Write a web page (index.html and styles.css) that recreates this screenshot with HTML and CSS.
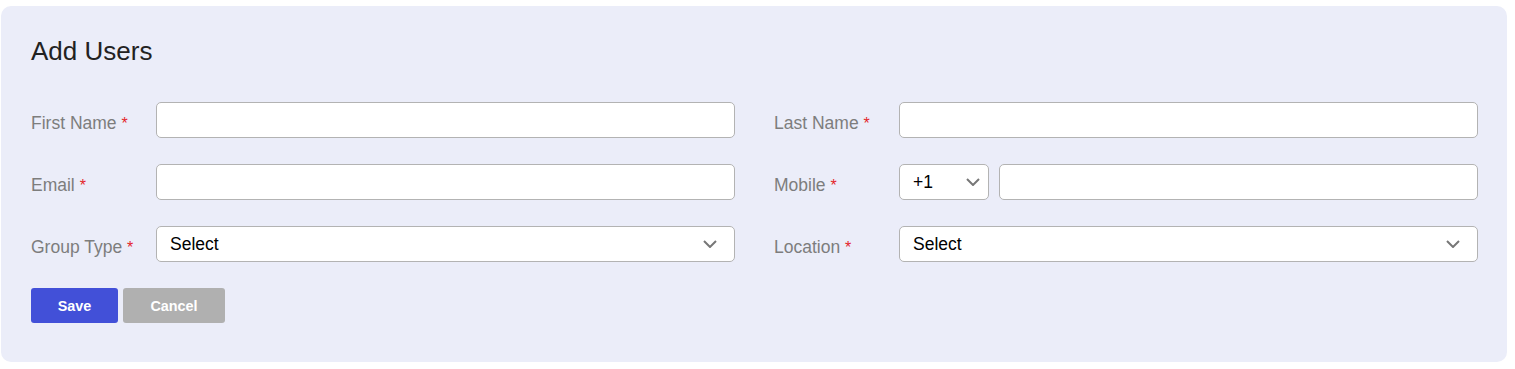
FILE: index.html
```html
<!DOCTYPE html>
<html lang="en">
<head>
    <meta charset="UTF-8">
    <meta name="viewport" content="width=device-width, initial-scale=1.0">
    <title>Add Users</title>
    <link rel="stylesheet" href="styles.css">
</head>
<body>
    <div class="card">
        <h2 class="title">Add Users</h2>
        <form class="user-form">
            <div class="form-grid">
                <div class="form-group">
                    <label class="form-label">First Name <span class="req">*</span></label>
                    <input type="text" class="form-input">
                </div>
                <div class="form-group">
                    <label class="form-label">Last Name <span class="req">*</span></label>
                    <input type="text" class="form-input">
                </div>
                <div class="form-group">
                    <label class="form-label">Email <span class="req">*</span></label>
                    <input type="email" class="form-input">
                </div>
                <div class="form-group">
                    <label class="form-label">Mobile <span class="req">*</span></label>
                    <div class="phone-row">
                        <div class="select-box code-box">
                            <span class="select-value">+1</span>
                            <svg class="chevron" width="14" height="8" viewBox="0 0 14 8"><path d="M1 1l6 6 6-6" fill="none" stroke="#777" stroke-width="2"/></svg>
                        </div>
                        <input type="tel" class="form-input">
                    </div>
                </div>
                <div class="form-group">
                    <label class="form-label">Group Type <span class="req">*</span></label>
                    <div class="select-box">
                        <span class="select-value">Select</span>
                        <svg class="chevron" width="14" height="8" viewBox="0 0 14 8"><path d="M1 1l6 6 6-6" fill="none" stroke="#777" stroke-width="2"/></svg>
                    </div>
                </div>
                <div class="form-group">
                    <label class="form-label">Location <span class="req">*</span></label>
                    <div class="select-box">
                        <span class="select-value">Select</span>
                        <svg class="chevron" width="14" height="8" viewBox="0 0 14 8"><path d="M1 1l6 6 6-6" fill="none" stroke="#777" stroke-width="2"/></svg>
                    </div>
                </div>
            </div>
            <div class="actions">
                <button type="submit" class="btn btn-save">Save</button>
                <button type="button" class="btn btn-cancel">Cancel</button>
            </div>
        </form>
    </div>
</body>
</html>
```

FILE: styles.css
```css
* {
    margin: 0;
    padding: 0;
    box-sizing: border-box;
    font-family: 'Liberation Sans', Arial, sans-serif;
}

body {
    background: #fff;
    padding: 6px 8px 0 1px;
}

.card {
    background: #ebedf9;
    border-radius: 10px;
    padding: 30px 29px 40px 30px;
    height: 356px;
}

.title {
    font-size: 26px;
    font-weight: 400;
    color: #222;
    line-height: 30px;
    margin-bottom: 36px;
}

.form-grid {
    display: grid;
    grid-template-columns: 1fr 1fr;
    column-gap: 39px;
    row-gap: 26px;
}

.form-group {
    display: flex;
    align-items: center;
}

.form-label {
    width: 125px;
    flex-shrink: 0;
    font-size: 17.5px;
    color: #7d7d7d;
    padding-top: 7px;
}

.req {
    color: #e4262b;
    font-size: 16px;
}

.form-input {
    flex: 1;
    min-width: 0;
    height: 36px;
    border: 1px solid #b3b3b3;
    border-radius: 5px;
    background: #fff;
    font-size: 17.5px;
    padding: 0 13px;
    outline: none;
}

.select-box {
    flex: 1;
    height: 36px;
    border: 1px solid #b3b3b3;
    border-radius: 5px;
    background: #fff;
    display: flex;
    align-items: center;
    justify-content: space-between;
    padding: 0 17px 0 13px;
}

.select-value {
    font-size: 17.5px;
    color: #000;
    padding-top: 1px;
}

.chevron {
    display: block;
}

.phone-row {
    flex: 1;
    display: flex;
    gap: 10px;
}

.code-box {
    flex: 0 0 90px;
    padding: 0 8px 0 13px;
}

.actions {
    display: flex;
    gap: 5px;
    margin-top: 26px;
}

.btn {
    height: 35px;
    border: none;
    border-radius: 3px;
    color: #fff;
    font-size: 14.4px;
    font-weight: 700;
    cursor: pointer;
}

.btn-save {
    width: 87px;
    background: #4250d8;
}

.btn-cancel {
    width: 102px;
    background: #b0b0b0;
}
```
